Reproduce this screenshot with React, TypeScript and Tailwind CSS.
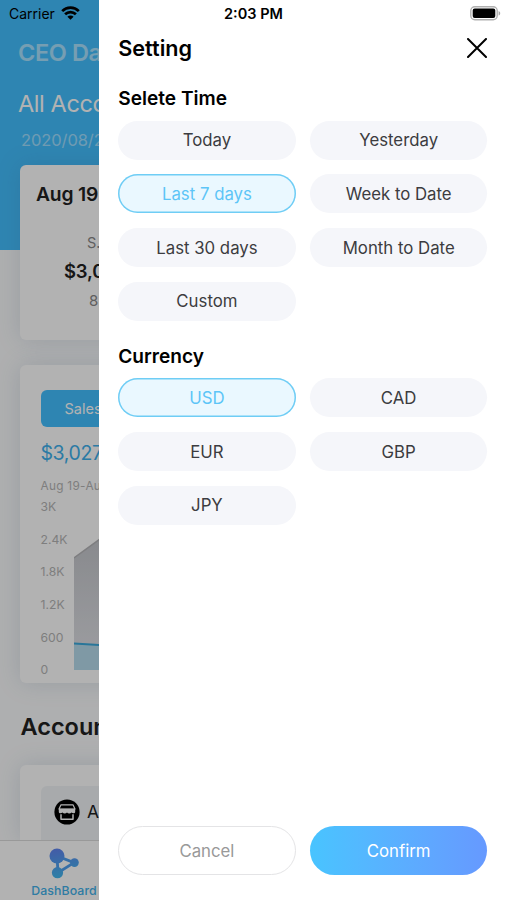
import { useState } from 'react'

const TIMES = ['Today', 'Yesterday', 'Last 7 days', 'Week to Date', 'Last 30 days', 'Month to Date', 'Custom']
const CURRENCIES = ['USD', 'CAD', 'EUR', 'GBP', 'JPY']
const TICKS = ['3K', '2.4K', '1.8K', '1.2K', '600', '0']

export default function App() {
  return (
    <div className="relative flex h-[900px] w-[507px] overflow-hidden bg-white font-['Inter',sans-serif] text-black">
      <div className="relative w-[99px] shrink-0 overflow-hidden">
        <Dashboard />
        <div className="absolute inset-0 bg-black/30" />
      </div>
      <SettingDrawer />
      <StatusBar />
    </div>
  )
}

function StatusBar() {
  return (
    <div className="absolute inset-x-0 top-0 flex h-7 items-center justify-between pl-[9px] pr-[6px] text-[14px]">
      <div className="flex flex-1 items-center gap-[6px]">
        <span className="-mt-px">Carrier</span>
        <svg className="-mt-[2px]" width="19" height="14" viewBox="0 0 19 14" fill="none" stroke="#000" strokeWidth="2.7">
          <path d="M1.2 5.1a11.7 11.7 0 0 1 16.6 0" />
          <path d="M4.1 8.3a7.6 7.6 0 0 1 10.8 0" />
          <path d="M9.5 13.8 6.4 10.7a4.4 4.4 0 0 1 6.2 0z" fill="#000" stroke="none" />
        </svg>
      </div>
      <span className="-ml-[3px] text-[14.5px] font-semibold">2:03 PM</span>
      <div className="flex flex-1 justify-end">
        <svg className="-mt-[2px]" width="31" height="15" viewBox="0 0 31 15">
          <rect x="0.8" y="0.8" width="26.4" height="13" rx="4" fill="#fff" stroke="#b0b0b0" strokeWidth="1.4" />
          <rect x="2.7" y="2.6" width="22.6" height="9.4" rx="2" fill="#000" />
          <path d="M28.6 5v4.6c2.2-.8 2.2-3.8 0-4.6z" fill="#a8a8a8" />
        </svg>
      </div>
    </div>
  )
}

function SettingDrawer() {
  const [time, setTime] = useState('Last 7 days')
  const [currency, setCurrency] = useState('USD')

  return (
    <aside className="flex flex-1 flex-col bg-white pb-[25px] pl-[19.3px] pr-[19.7px] pt-[34px]">
      <header className="flex h-7 items-center justify-between">
        <h1 className="text-[21.6px] font-semibold">Setting</h1>
        <button type="button" aria-label="Close">
          <svg width="20" height="20" viewBox="0 0 20 20" stroke="#000" strokeWidth="2" strokeLinecap="round">
            <path d="M1 1 19 19M19 1 1 19" />
          </svg>
        </button>
      </header>

      <h2 className="mt-[22px] text-[19.1px] font-semibold leading-7">Selete Time</h2>
      <Options items={TIMES} value={time} onChange={setTime} />

      <h2 className="mt-[21px] text-[19.1px] font-semibold leading-7">Currency</h2>
      <Options items={CURRENCIES} value={currency} onChange={setCurrency} />

      <footer className="mt-auto grid grid-cols-2 gap-[14.5px] text-[16.8px]">
        <button type="button" className="h-[49px] rounded-full border border-[#e4e4e6] pt-[2px] text-[#999]">
          Cancel
        </button>
        <button type="button" className="h-[49px] rounded-full bg-linear-to-r from-[#48c4ff] to-[#6699ff] pt-[2px] text-white">
          Confirm
        </button>
      </footer>
    </aside>
  )
}

function Options({ items, value, onChange }: { items: string[]; value: string; onChange: (v: string) => void }) {
  return (
    <div className="mt-[8.5px] grid grid-cols-2 gap-x-[14.5px] gap-y-[14.8px]">
      {items.map((item) => (
        <button
          key={item}
          type="button"
          onClick={() => onChange(item)}
          className={
            item === value
              ? 'h-[39px] rounded-full bg-[#eaf8ff] pt-px text-[16.8px] text-[#5dc5f7] ring-[1.5px] ring-inset ring-[#6fcdf5]'
              : 'h-[39px] rounded-full bg-[#f5f6fa] pt-px text-[16.8px] text-[#3c3c40]'
          }
        >
          {item}
        </button>
      ))}
    </div>
  )
}

function Dashboard() {
  return (
    <div className="flex h-full w-[507px] flex-col whitespace-nowrap bg-[#fafbfc]">
      <div className="h-[250px] shrink-0 bg-[#43bfff] pl-[18px] pt-[37px] text-white">
        <div className="text-[23.5px] font-semibold leading-8 tracking-[-0.4px] text-white/55">CEO Da</div>
        <div className="mt-[19px] text-[23.5px] leading-8 tracking-[-0.4px]">All Acco</div>
        <div className="ml-[3px] mt-[8px] text-[16.5px] leading-6 tracking-[-0.1px] text-white/50">2020/08/2</div>
      </div>

      <div className="mx-5 -mt-[85px] h-[175px] shrink-0 rounded-md bg-white px-[16px] pt-[15px] shadow-[0_0_24px_rgba(70,105,140,0.18)]">
        <div className="text-[19.3px] font-semibold leading-7 tracking-[-0.2px] text-[#222]">Aug 19</div>
        <div className="ml-[51px] mt-[24px] text-[14.5px] leading-[22px] text-[#888]">S.</div>
        <div className="ml-[28px] mt-[4px] text-[18.5px] font-semibold leading-[26px] tracking-[-0.2px] text-[#222]">$3,0</div>
        <div className="ml-[53px] mt-[6px] text-[15px] leading-[22px] text-[#888]">8</div>
      </div>

      <div className="mx-5 mt-[25px] h-[318px] shrink-0 rounded-md bg-white pl-[20.5px] pt-[25px] shadow-[0_0_24px_rgba(70,105,140,0.18)]">
        <div className="h-[37px] w-[106px] rounded-md bg-[#43bfff] pl-[24px] text-[14.5px] leading-[38px] text-white">Sales</div>
        <div className="mt-[12px] text-[19.5px] leading-7 tracking-[-0.4px] text-[#3eb0ec]">$3,027</div>
        <div className="mt-[9px] text-[11.8px] leading-5 tracking-[0.3px] text-[#b5b5b5]">Aug 19-Au</div>
        <div className="mt-[3px] flex">
          <div className="flex w-[33px] flex-col gap-[16.7px] text-[12.2px] leading-4 text-[#b5b5b5]">
            {TICKS.map((t) => (
              <span key={t}>{t}</span>
            ))}
          </div>
          <svg className="mt-[8px]" width="200" height="164" viewBox="0 0 200 164">
            <defs>
              <linearGradient id="area" x1="0" y1="0" x2="0" y2="1">
                <stop offset="0" stopColor="#c4c6cb" />
                <stop offset="1" stopColor="#e2e3e8" />
              </linearGradient>
            </defs>
            <path d="M0 51 26 32 200 60V163H0z" fill="url(#area)" />
            <path d="M0 51 26 32 200 60" fill="none" stroke="#b5b5b8" strokeWidth="1.5" />
            <path d="M0 136.5 26 138 200 135V163H0z" fill="#b7dced" />
            <path d="M0 136.5 26 138 200 135" fill="none" stroke="#3ba9dc" strokeWidth="2" />
          </svg>
        </div>
      </div>

      <div className="ml-[20.5px] mt-[28px] text-[23.5px] font-semibold leading-8 text-[#222]">Accoun</div>

      <div className="mx-5 mt-[22px] h-[75px] shrink-0 rounded-t-md bg-white pl-[21px] pt-[21px] shadow-[0_0_24px_rgba(70,105,140,0.18)]">
        <div className="flex h-[54px] items-center gap-[7px] rounded-tl-md bg-[#f1f4f6] pb-[2px] pl-[13px] text-[17.5px] text-[#222]">
          <StoreIcon />
          <span>A</span>
        </div>
      </div>

      <nav className="relative h-[61px] shrink-0 border-t border-[#dcdcdc] bg-white">
        <div className="flex w-[128px] flex-col items-center pt-[7px]">
          <DashBoardIcon />
          <span className="mt-[4px] text-[12.3px] font-medium leading-4 tracking-[0.1px] text-[#42b1ea]">DashBoard</span>
        </div>
      </nav>
    </div>
  )
}

function StoreIcon() {
  return (
    <svg width="26" height="26" viewBox="0 0 26 26">
      <circle cx="13" cy="13" r="12.6" fill="#000" />
      <path d="M7 5.8h12l2 4.2H5z" fill="none" stroke="#fff" strokeWidth="1.2" strokeLinejoin="round" />
      <path d="M4.8 9.8h16.4v3c0 1.7-2.5 2-3.6.7-1.1 1.3-3.6 1.3-4.6 0-1 1.3-3.5 1.3-4.6 0-1.1 1.3-3.6 1-3.6-.7z" fill="#fff" />
      <path d="M7 15.3v5h12v-5" fill="none" stroke="#fff" strokeWidth="1.5" strokeLinejoin="round" />
    </svg>
  )
}

function DashBoardIcon() {
  return (
    <svg width="30" height="31" viewBox="0 0 30 31">
      <defs>
        <linearGradient id="nodes" gradientUnits="userSpaceOnUse" x1="8" y1="2" x2="12" y2="30">
          <stop offset="0" stopColor="#5f86f0" />
          <stop offset="1" stopColor="#42b8ee" />
        </linearGradient>
      </defs>
      <path d="M8 8 25 14.6 9 24.7z" fill="none" stroke="#4f9ff0" strokeWidth="2.8" />
      <g fill="url(#nodes)">
        <circle cx="8" cy="8" r="7.5" />
        <circle cx="25.5" cy="14.6" r="4.3" />
        <circle cx="8.5" cy="24.7" r="5.6" />
      </g>
    </svg>
  )
}
